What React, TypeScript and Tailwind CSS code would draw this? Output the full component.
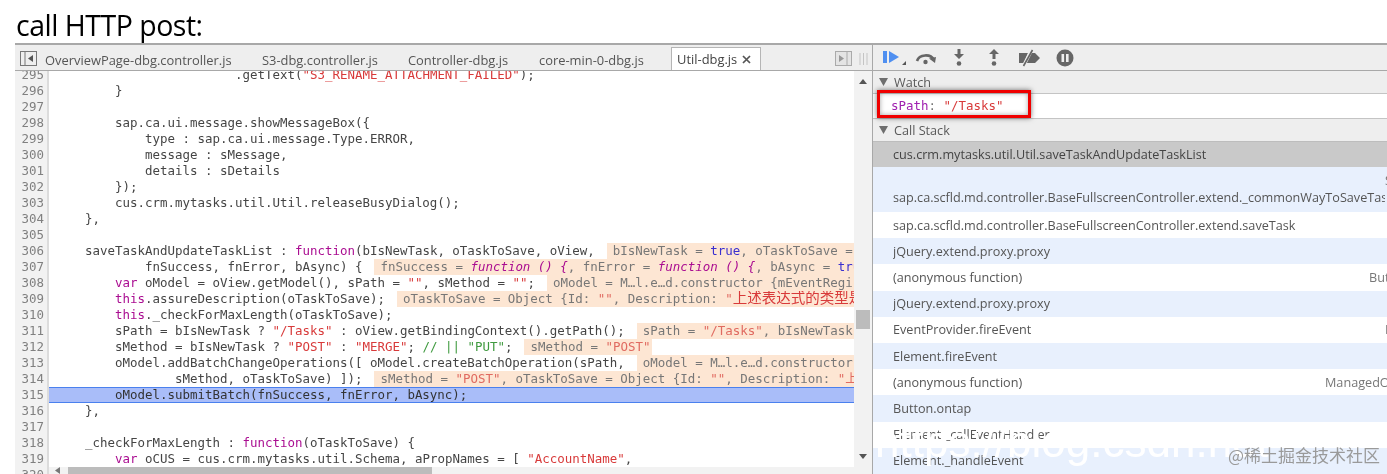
const kw = "text-[#aa0d91]";
const str = "text-[#d83a3a]";
const decoStr = "text-[#e06a60]";
const blue = "text-[#3a2fd0]";
const green = "text-[#3f9a3f]";
const dim = "text-[#777777]";
const cjk = "text-[14.5px] leading-none text-[#d83a3a]";

type Seg = [string, string?];
type Line = { n: number; code?: Seg[]; deco?: Seg[] };

const lines: Line[] = [
  { n: 295, code: [["                        .getText("], ['"S3_RENAME_ATTACHMENT_FAILED"', str], [");"]] },
  { n: 296, code: [["        }"]] },
  { n: 297 },
  { n: 298, code: [["        sap.ca.ui.message.showMessageBox({"]] },
  { n: 299, code: [["            type : sap.ca.ui.message.Type.ERROR,"]] },
  { n: 300, code: [["            message : sMessage,"]] },
  { n: 301, code: [["            details : sDetails"]] },
  { n: 302, code: [["        });"]] },
  { n: 303, code: [["        cus.crm.mytasks.util.Util.releaseBusyDialog();"]] },
  { n: 304, code: [["    },"]] },
  { n: 305 },
  {
    n: 306,
    code: [["    saveTaskAndUpdateTaskList : "], ["function", kw], ["(bIsNewTask, oTaskToSave, oView,"]],
    deco: [["bIsNewTask = "], ["true", blue], [", oTaskToSave = Object {Id: "]],
  },
  {
    n: 307,
    code: [["            fnSuccess, fnError, bAsync) {"]],
    deco: [["fnSuccess = "], ["function () {", `${kw} italic`], [", fnError = "], ["function () {", `${kw} italic`], [", bAsync = "], ["true", blue]],
  },
  {
    n: 308,
    code: [["        "], ["var", kw], [" oModel = oView.getModel(), sPath = "], ['""', str], [", sMethod = "], ['""', str], [";"]],
    deco: [["oModel = M…l.e…d.constructor {mEventRegistry: Object"]],
  },
  {
    n: 309,
    code: [["        "], ["this", kw], [".assureDescription(oTaskToSave);"]],
    deco: [["oTaskToSave = Object {Id: "], ['""', decoStr], [", Description: "], ['"', decoStr], ["上述表达式的类型是", cjk]],
  },
  { n: 310, code: [["        "], ["this", kw], ["._checkForMaxLength(oTaskToSave);"]] },
  {
    n: 311,
    code: [["        sPath = bIsNewTask ? "], ['"/Tasks"', str], [" : oView.getBindingContext().getPath();"]],
    deco: [["sPath = "], ['"/Tasks"', decoStr], [", bIsNewTask = true"]],
  },
  {
    n: 312,
    code: [["        sMethod = bIsNewTask ? "], ['"POST"', str], [" : "], ['"MERGE"', str], ["; "], ["// || ", green], ['"PUT"', green], [";"]],
    deco: [["sMethod = "], ['"POST"', decoStr]],
  },
  {
    n: 313,
    code: [["        oModel.addBatchChangeOperations([ oModel.createBatchOperation(sPath,"]],
    deco: [["oModel = M…l.e…d.constructor {mEventRegistry"]],
  },
  {
    n: 314,
    code: [["                sMethod, oTaskToSave) ]);"]],
    deco: [["sMethod = "], ['"POST"', decoStr], [", oTaskToSave = Object {Id: "], ['""', decoStr], [", Description: "], ['"上述表达', decoStr]],
  },
  { n: 315, code: [["        oModel.submitBatch(fnSuccess, fnError, bAsync);"]] },
  { n: 316, code: [["    },"]] },
  { n: 317 },
  { n: 318, code: [["    _checkForMaxLength : "], ["function", kw], ["(oTaskToSave) {"]] },
  { n: 319, code: [["        "], ["var", kw], [" oCUS = cus.crm.mytasks.util.Schema, aPropNames = [ "], ['"AccountName"', str], [","]] },
  { n: 320 },
];

const tabs = ["OverviewPage-dbg.controller.js", "S3-dbg.controller.js", "Controller-dbg.js", "core-min-0-dbg.js"];

const frames: { name: string; tall?: boolean; file?: string; fileCls?: string }[] = [
  { name: "sap.ca.scfld.md.controller.BaseFullscreenController.extend._commonWayToSaveTask", tall: true, file: "S3-dbg.js", fileCls: "w-[2px] self-start mt-[4px]" },
  { name: "sap.ca.scfld.md.controller.BaseFullscreenController.extend.saveTask" },
  { name: "jQuery.extend.proxy.proxy" },
  { name: "(anonymous function)", file: "Button-dbg.js", fileCls: "w-[18px]" },
  { name: "jQuery.extend.proxy.proxy" },
  { name: "EventProvider.fireEvent", file: "EventProvider-dbg.js", fileCls: "w-[2px]" },
  { name: "Element.fireEvent" },
  { name: "(anonymous function)", file: "ManagedObject-dbg.js", fileCls: "w-[62px]" },
  { name: "Button.ontap" },
  { name: "Element._callEventHandler" },
  { name: "Element._handleEvent" },
];

const Segs = ({ segs }: { segs: Seg[] }) => (
  <>
    {segs.map((s, i) => (
      <span key={i} className={s[1]}>
        {s[0]}
      </span>
    ))}
  </>
);

const CodeRow = ({ line }: { line: Line }) => {
  const current = line.n === 315;
  return (
    <div className="flex h-4 shrink-0 leading-4">
      <div className="w-[34px] shrink-0 border-r-2 border-[#dcdcdc] bg-[#f2f2f2] pr-[3px] text-right text-[#808080]">{line.n}</div>
      <div
        className={
          current
            ? "min-w-0 flex-1 overflow-hidden whitespace-pre border-y border-[#4a80ee] bg-[#a9bdf9] pl-[6px] leading-[14px] text-[#333]"
            : "flex min-w-0 flex-1 overflow-hidden whitespace-pre pl-[6px] text-[#454545]"
        }
      >
        {line.code && (
          <span className="shrink-0">
            <Segs segs={line.code} />
          </span>
        )}
        {line.deco && (
          <span className={`ml-[12px] shrink-0 bg-[#fde6d3] pl-[6px] pr-[2px] ${dim}`}>
            <Segs segs={line.deco} />
          </span>
        )}
      </div>
    </div>
  );
};

const CollapseArrow = () => (
  <svg width="9" height="8" viewBox="0 0 9 8" className="mr-[6px]">
    <path d="M0 0h9L4.5 8z" fill="#6e6e6e" />
  </svg>
);

const PanelHeader = ({ title }: { title: string }) => (
  <div className="flex h-[22px] shrink-0 items-center bg-[#eeeeee] pl-[6px] text-[12.65px] text-[#5a5a5a]">
    <CollapseArrow />
    {title}
  </div>
);

const ToolbarIcons = () => (
  <div className="flex h-[26px] shrink-0 items-center border-b border-[#a8a8a8] bg-[#eeeeee] pl-[10px]">
    <svg width="24" height="16" viewBox="0 0 24 16">
      <rect x="0" y="1" width="4" height="12" fill="#4f8ff0" />
      <path d="M6 1l10 6-10 6z" fill="#4f8ff0" />
      <path d="M23 11v4h-4z" fill="#555" />
    </svg>
    <svg width="22" height="14" viewBox="0 0 22 14" className="ml-[8px]">
      <path d="M2 10a9 7.5 0 0 1 17-1" fill="none" stroke="#666" strokeWidth="2.6" />
      <path d="M14 7.5l7-1.5-1 6z" fill="#666" />
      <circle cx="10.5" cy="11" r="2.2" fill="#666" />
    </svg>
    <svg width="12" height="18" viewBox="0 0 12 18" className="ml-[16px]">
      <path d="M4.5 0h3v5H11l-5 5-5-5h3.5z" fill="#666" />
      <circle cx="6" cy="14.5" r="2.3" fill="#666" />
    </svg>
    <svg width="12" height="18" viewBox="0 0 12 18" className="ml-[23px]">
      <path d="M6 0l5 5H7.5v5h-3V5H1z" fill="#666" />
      <circle cx="6" cy="14.5" r="2.3" fill="#666" />
    </svg>
    <svg width="21" height="18" viewBox="0 0 21 18" className="ml-[19px]">
      <path d="M0 4h9l-4 10H0zM10 4h6l5 5-5 5H6z" fill="#666" />
      <path d="M4 18L13 0" stroke="#eeeeee" strokeWidth="3.4" />
      <path d="M4.5 17L13.5 1" stroke="#666" strokeWidth="1.6" />
    </svg>
    <svg width="18" height="18" viewBox="0 0 18 18" className="ml-[16px]">
      <circle cx="9" cy="9" r="8.5" fill="#666" />
      <rect x="5.5" y="5" width="2.6" height="8" fill="#eee" />
      <rect x="10" y="5" width="2.6" height="8" fill="#eee" />
    </svg>
  </div>
);

export default function App() {
  return (
    <div className="flex h-[474px] w-[1387px] flex-col overflow-hidden bg-white blur-[0.35px] [font-family:'Open_Sans',sans-serif]">
      <h1 className="ml-4 h-[43px] shrink-0 text-[28.5px] leading-[50px] tracking-[-0.5px] text-black">call HTTP post:</h1>

      <div className="relative ml-[15px] flex min-h-0 flex-1 border-t-2 border-[#a8a8a8]">
        {/* sources */}
        <div className="flex w-[858px] shrink-0 flex-col border-r border-[#a8a8a8]">
          <div className="flex h-[26px] shrink-0 items-end border-b border-[#a8a8a8] bg-[#eeeeee] text-[12.9px] text-[#555]">
            <svg width="18" height="16" viewBox="0 0 18 16" className="mb-[3px] ml-[5px] mr-[7px]">
              <rect x="0.5" y="0.5" width="16" height="14" fill="none" stroke="#777" />
              <path d="M5 1v13" stroke="#777" />
              <path d="M13 4v7L8 7.5z" fill="#555" />
            </svg>
            {tabs.map((t, i) => (
              <div key={t} className={`h-[22px] leading-6 ${["w-[217px]", "w-[146px]", "w-[131px]", "w-[132px]"][i]}`}>
                {t}
              </div>
            ))}
            <div className="flex h-[23px] w-[90px] items-center gap-[5px] border-x border-t border-[#b5b5b5] bg-white pl-[5px] pt-[1px] text-[#444]">
              Util-dbg.js
              <svg width="9" height="9" viewBox="0 0 9 9">
                <path d="M1 1l7 7M8 1l-7 7" stroke="#555" strokeWidth="1.7" />
              </svg>
            </div>
            <svg width="18" height="16" viewBox="0 0 18 16" className="mb-[3px] ml-[74px]">
              <rect x="0.5" y="0.5" width="16" height="14" fill="#e4e4e4" stroke="#aaa" />
              <path d="M12 1v13" stroke="#aaa" />
              <path d="M4 4v7l5-3.5z" fill="#999" />
            </svg>
            <svg width="9" height="14" viewBox="0 0 9 14" className="mb-1 ml-[6px]">
              <path d="M1 1v12M4.5 1v12M8 1v12" stroke="#c4c4c4" />
            </svg>
          </div>

          <div className="relative flex min-h-0 flex-1 overflow-hidden">
            <div className="flex min-w-0 flex-1 flex-col overflow-hidden">
              <div className="-mt-[4px] flex flex-col text-[12.46px] [font-family:'DejaVu_Sans_Mono','Noto_Sans_CJK_SC',monospace]">
                {lines.map((l) => (
                  <CodeRow key={l.n} line={l} />
                ))}
              </div>
            </div>

            {/* vertical scrollbar */}
            <div className="flex w-[18px] shrink-0 flex-col items-center bg-[#f2f2f2]">
              <svg width="8" height="5" viewBox="0 0 8 5" className="mt-[8px]">
                <path d="M0 5h8L4 0z" fill="#555" />
              </svg>
              <div className="mt-[226px] h-[19px] w-[14px] bg-[#bcbcbc]" />
              <svg width="8" height="5" viewBox="0 0 8 5" className="mt-[125px]">
                <path d="M0 0h8L4 5z" fill="#555" />
              </svg>
            </div>

            {/* horizontal scrollbar */}
            <div className="absolute bottom-0 left-[34px] right-[18px] flex h-[7px] items-start bg-[#f2f2f2] pl-[6px]">
              <svg width="5" height="7" viewBox="0 0 5 7" className="mr-[8px]">
                <path d="M5 0v7L0 3.5z" fill="#777" />
              </svg>
              <div className="h-[7px] w-[364px] bg-[#bcbcbc]" />
            </div>
          </div>
        </div>

        {/* right sidebar */}
        <div className="flex min-w-0 flex-1 flex-col text-[12.65px] text-[#555]">
          <ToolbarIcons />
          <PanelHeader title="Watch" />
          <div className="flex h-[26px] shrink-0 items-center border-y border-[#c4c4c4] bg-white pl-[18px] text-[12.46px] [font-family:'DejaVu_Sans_Mono',monospace]">
            <span className="text-[#a020b0]">sPath</span>
            <span className="text-[#777]">:&nbsp;</span>
            <span className="text-[#d83a3a]">"/Tasks"</span>
          </div>
          <PanelHeader title="Call Stack" />
          <div className="flex h-[26px] shrink-0 items-center border-t border-[#bdbdbd] bg-[#c9c9c9] pl-5 text-[#444]">
            cus.crm.mytasks.util.Util.saveTaskAndUpdateTaskList
          </div>
          {frames.map((f, i) => (
            <div
              key={i}
              className={`flex shrink-0 pl-5 ${f.tall ? "h-[45px] items-end pb-[5px]" : "h-[26.2px] items-center"} ${i % 2 === 0 ? "bg-[#e8f0fd]" : "bg-white"}`}
            >
              <span className="min-w-0 flex-1 overflow-hidden whitespace-pre">{f.name}</span>
              {f.file && <span className={`shrink-0 overflow-hidden whitespace-pre text-[#777] ${f.fileCls}`}>{f.file}</span>}
            </div>
          ))}
        </div>

        {/* red highlight around the watch value */}
        <div className="absolute left-[862px] top-[45px] h-[28px] w-[154px] border-[3px] border-[#f00000] shadow-[0_0_5px_rgba(0,0,0,0.55),inset_0_0_5px_rgba(0,0,0,0.35)]" />

        {/* watermarks */}
        <div className="absolute left-[860px] top-[373px] whitespace-pre text-[44px] leading-[48px] text-white [font-family:'Liberation_Sans',sans-serif]">
          https://blog.csdn.net
        </div>
        <div className="absolute right-[7px] top-[398px] text-[17px] leading-6 text-[#9a9a9a] [font-family:'Noto_Sans_CJK_SC',sans-serif]">
          @稀土掘金技术社区
        </div>
      </div>
    </div>
  );
}
